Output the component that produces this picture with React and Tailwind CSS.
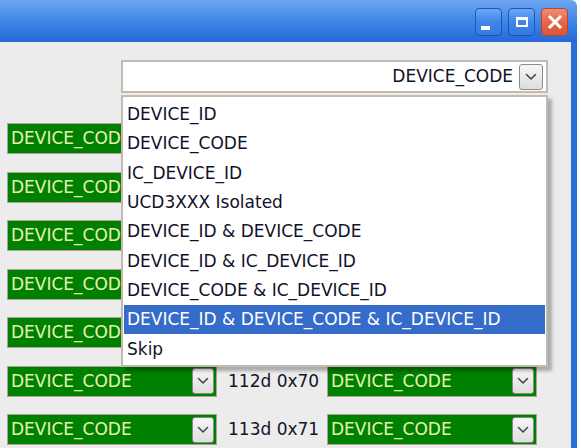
import React from "react";

const Chevron = () => (
  <svg width="12" height="8" viewBox="0 0 12 8" fill="none">
    <path d="M1.5 1.5 L6 6 L10.5 1.5" stroke="#4a4a4a" strokeWidth="1.6" strokeLinecap="round" strokeLinejoin="round" />
  </svg>
);

const ArrowBtn = ({ className = "" }) => (
  <div className={"flex items-center justify-center rounded-[3px] border border-[#8a8a8a] bg-gradient-to-b from-[#f6f6f6] to-[#dedede] " + className}>
    <Chevron />
  </div>
);

const GreenCombo = ({ text = "DEVICE_CODE" }) => (
  <div className="flex h-[31px] w-[210px] shrink-0 items-center border border-[#aaa197] bg-[#008000] pl-[3px] pr-[2px]">
    <span className="text-[17px] leading-none text-[#e4f2b4]">{text}</span>
    <ArrowBtn className="ml-auto h-[26px] w-[22px]" />
  </div>
);

const rows = ["", "", "", "", "", "112d 0x70", "113d 0x71"];

const items = [
  "DEVICE_ID",
  "DEVICE_CODE",
  "IC_DEVICE_ID",
  "UCD3XXX Isolated",
  "DEVICE_ID & DEVICE_CODE",
  "DEVICE_ID & IC_DEVICE_ID",
  "DEVICE_CODE & IC_DEVICE_ID",
  "DEVICE_ID & DEVICE_CODE & IC_DEVICE_ID",
  "Skip",
];

const TitleBtn = ({ children, red }) => (
  <div
    className={
      "flex h-[28px] w-[27px] items-center justify-center rounded-[4px] border " +
      (red
        ? "border-[#b04a30] bg-gradient-to-b from-[#f08c74] via-[#e8654a] to-[#d8553a]"
        : "border-[#1d56b8] bg-gradient-to-b from-[#6aa6f4] via-[#3f86ea] to-[#3478e0]")
    }
  >
    {children}
  </div>
);

export default function App() {
  return (
    <div
      className="relative flex h-[448px] w-[581px] flex-col overflow-hidden bg-white text-[#12122a]"
      style={{ fontFamily: '"DejaVu Sans", Verdana, sans-serif' }}
    >
      {/* title bar */}
      <div className="flex h-[42px] w-[577px] shrink-0 items-start justify-end gap-[6px] rounded-tr-[6px] bg-gradient-to-b from-[#6ea6f0] via-[#4086e8] to-[#2469d8] pr-[9px] pt-[8px]">
        <TitleBtn>
          <div className="mt-[12px] mr-[6px] h-[4px] w-[9px] bg-white" />
        </TitleBtn>
        <TitleBtn>
          <div className="h-[10px] w-[12px] border-2 border-t-[3px] border-white" />
        </TitleBtn>
        <TitleBtn red>
          <svg width="16" height="16" viewBox="0 0 16 16">
            <path d="M3 3 L13 13 M13 3 L3 13" stroke="white" strokeWidth="3" strokeLinecap="square" />
          </svg>
        </TitleBtn>
      </div>

      {/* content */}
      <div className="relative flex w-[577px] flex-1 flex-col border-r-[6px] border-[#2a6ddc] bg-[#ececec] pl-[7px]">
        {/* top combo */}
        <div className="ml-[114px] mt-[18px] flex h-[33px] w-[427px] items-center border-2 border-[#c4b9ae] bg-white pr-[3px]">
          <span className="ml-auto mr-[6px] text-[17px] leading-none">DEVICE_CODE</span>
          <ArrowBtn className="h-[26px] w-[24px]" />
        </div>

        {/* rows */}
        <div className="mt-[30px] flex flex-col gap-[17.5px]">
          {rows.map((r, i) => (
            <div key={i} className="flex items-center">
              <GreenCombo />
              <div className="w-[110px] pl-[11px] text-[17px] leading-none">{r}</div>
              <GreenCombo text={r ? "DEVICE_CODE" : ""} />
            </div>
          ))}
        </div>

        {/* dropdown popup */}
        <div className="absolute left-[121px] top-[53px] w-[427px] border-2 border-[#c4b9ae] bg-white px-[1px] pb-[1px] pt-[3px] shadow-[4px_4px_3px_rgba(0,0,0,0.28)]">
          {items.map((it, i) => (
            <div
              key={it}
              className={
                "flex h-[29.3px] items-center pl-[3px] text-[17px] leading-none " +
                (i === 7 ? "bg-[#356bc9] text-white" : "")
              }
            >
              {it}
            </div>
          ))}
        </div>
      </div>
    </div>
  );
}
